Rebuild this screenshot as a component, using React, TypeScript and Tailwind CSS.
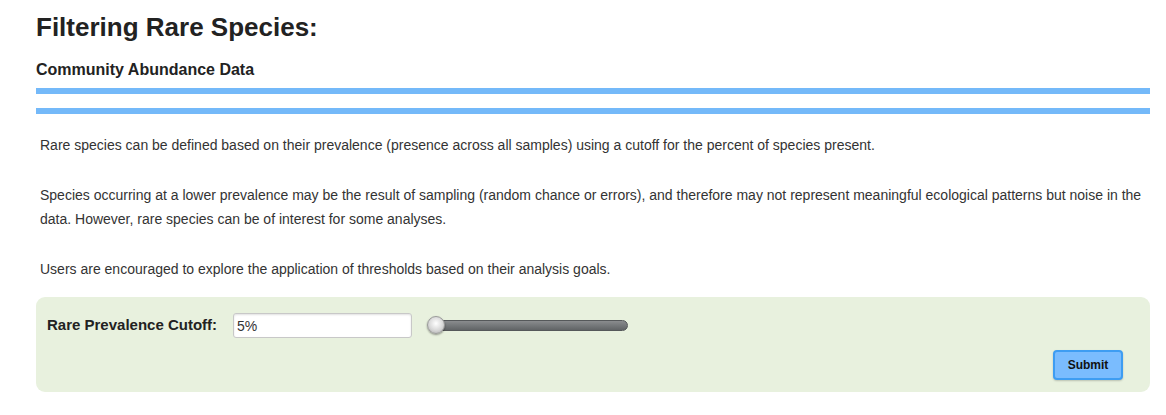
import React, { useState } from "react";

export default function App() {
  const [cutoff, setCutoff] = useState("5%");

  return (
    <div className="w-[1166px] h-[415px] bg-white text-[#333] font-['Liberation_Sans',Arial,sans-serif]">
      <div className="px-9 pt-[12px]">
        <h1 className="text-[26px] leading-[30px] font-bold text-[#222]">Filtering Rare Species:</h1>
        <h2 className="mt-[19px] text-[16px] leading-[18px] font-bold text-[#222]">Community Abundance Data</h2>
        <div className="mt-[9px] h-[6px] w-[1114px] bg-[#74b9f9]" />
        <div className="mt-[14px] h-[6px] w-[1114px] bg-[#74b9f9]" />

        <div className="mt-[19px] pl-1 w-[1114px] text-[14px] leading-[24px] text-[#333]">
          <p>Rare species can be defined based on their prevalence (presence across all samples) using a cutoff for the percent of species present.</p>
          <p className="mt-[26px]">
            Species occurring at a lower prevalence may be the result of sampling (random chance or errors), and therefore may not represent meaningful ecological patterns but noise in the data. However, rare species can be of interest for some analyses.
          </p>
          <p className="mt-[26px]">Users are encouraged to explore the application of thresholds based on their analysis goals.</p>
        </div>

        <div className="mt-[16px] w-[1114px] h-[95px] rounded-[9px] bg-[#e8f1de] px-[11px] pt-[16px] flex flex-col">
          <div className="flex items-center">
            <label className="text-[15px] font-bold text-[#222] w-[186px]">Rare Prevalence Cutoff:</label>
            <input
              value={cutoff}
              onChange={(e) => setCutoff(e.target.value)}
              className="w-[179px] h-[25px] bg-white border border-[#c8c8c8] rounded-[3px] px-[3px] text-[14px] text-[#333] shadow-[inset_0_1px_2px_rgba(0,0,0,0.12)] outline-none"
            />
            <div className="relative ml-[16px] w-[200px] h-[11px] rounded-[6px] bg-gradient-to-b from-[#8a8c8e] to-[#616466] border border-[#55585a]">
              <div className="absolute -left-[2px] -top-[5px] w-[18px] h-[18px] rounded-full border border-[#9a9a9a] bg-[radial-gradient(circle_at_50%_40%,#ffffff,#d8d8d8_55%,#a8a8a8)] shadow-[0_1px_2px_rgba(0,0,0,0.4)]" />
            </div>
          </div>
          <div className="flex justify-end mt-[12px] pr-[16px]">
            <button className="w-[70px] h-[30px] rounded-[4px] bg-[#7abcfe] border-2 border-[#3e9df2] text-[12px] font-bold text-[#111] shadow-[0_1px_2px_rgba(0,0,0,0.2)]">
              Submit
            </button>
          </div>
        </div>
      </div>
    </div>
  );
}
